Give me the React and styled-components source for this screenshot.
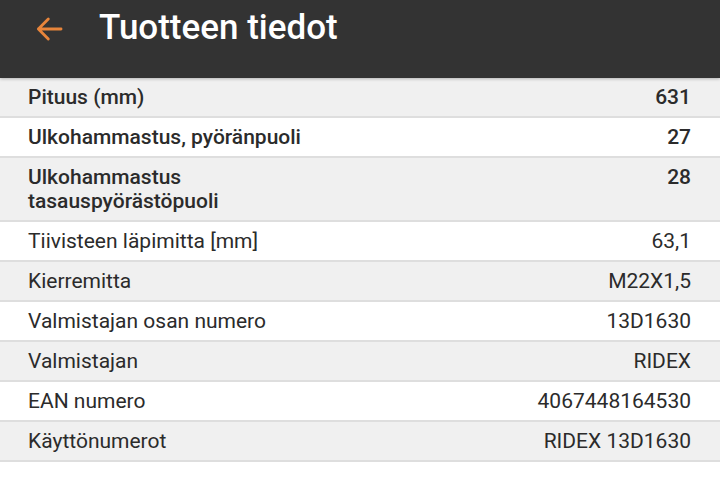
import styled, { createGlobalStyle } from "styled-components";

const GlobalStyle = createGlobalStyle`
  html, body {
    margin: 0;
    padding: 0;
    background: #ffffff;
    font-family: Roboto, "Noto Sans", sans-serif;
  }
`;

const Page = styled.div`
  width: 720px;
  min-height: 492px;
  background: #ffffff;
`;

const Header = styled.header`
  display: flex;
  align-items: flex-start;
  height: 78px;
  background: #333333;
  padding: 0 0 0 30px;
  box-sizing: border-box;
  box-shadow: 0 1px 3px rgba(0, 0, 0, 0.25);
  position: relative;
`;

const BackButton = styled.button`
  display: flex;
  align-items: center;
  justify-content: center;
  width: 38px;
  height: 38px;
  margin-top: 10px;
  padding: 0;
  border: none;
  background: none;
  cursor: pointer;
`;

const Title = styled.h1`
  margin: 5px 0 0 31px;
  color: #ffffff;
  font-size: 35px;
  font-weight: 500;
  line-height: 46px;
`;

const List = styled.div`
  display: flex;
  flex-direction: column;
`;

const Row = styled.div`
  display: flex;
  justify-content: space-between;
  align-items: flex-start;
  gap: 24px;
  padding: 7px 29px 7px 28px;
  background: ${(p) => (p.$shaded ? "#f0f0f0" : "#ffffff")};
  border-bottom: 2px solid #dedede;
  color: #2b2b2b;
  font-size: 21px;
  line-height: 24px;
  font-weight: ${(p) => (p.$strong ? 500 : 400)};
`;

const Label = styled.span`
  max-width: ${(p) => (p.$narrow ? "280px" : "none")};
`;

const Value = styled.span`
  text-align: right;
  white-space: nowrap;
`;

const rows = [
  { label: "Pituus (mm)", value: "631", strong: true },
  { label: "Ulkohammastus, pyöränpuoli", value: "27", strong: true },
  { label: "Ulkohammastus tasauspyörästöpuoli", value: "28", strong: true, narrow: true },
  { label: "Tiivisteen läpimitta [mm]", value: "63,1" },
  { label: "Kierremitta", value: "M22X1,5" },
  { label: "Valmistajan osan numero", value: "13D1630" },
  { label: "Valmistajan", value: "RIDEX" },
  { label: "EAN numero", value: "4067448164530" },
  { label: "Käyttönumerot", value: "RIDEX 13D1630" },
];

function ArrowBack() {
  return (
    <svg width="34" height="34" viewBox="0 0 24 24" fill="none">
      <path
        d="M20.5 12H4.5M11.5 5L4.5 12l7 7"
        stroke="#e8853b"
        strokeWidth="2"
        strokeLinecap="round"
        strokeLinejoin="round"
      />
    </svg>
  );
}

export default function App() {
  return (
    <Page>
      <GlobalStyle />
      <Header>
        <BackButton aria-label="Takaisin">
          <ArrowBack />
        </BackButton>
        <Title>Tuotteen tiedot</Title>
      </Header>
      <List>
        {rows.map((r, i) => (
          <Row key={r.label} $shaded={i % 2 === 0} $strong={r.strong}>
            <Label $narrow={r.narrow}>{r.label}</Label>
            <Value>{r.value}</Value>
          </Row>
        ))}
      </List>
    </Page>
  );
}
